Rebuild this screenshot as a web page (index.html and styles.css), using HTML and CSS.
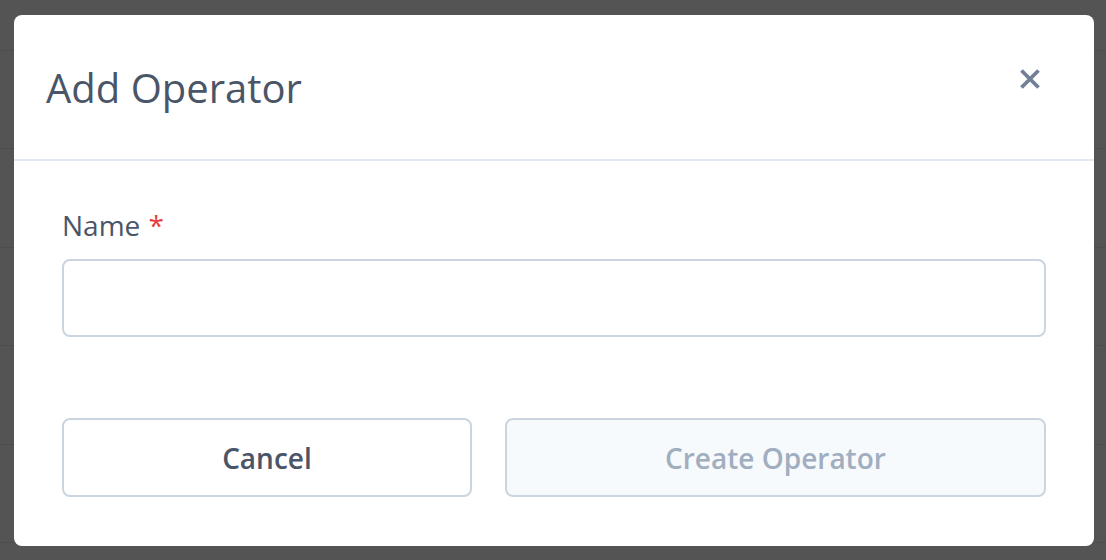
FILE: index.html
```html
<!DOCTYPE html>
<html lang="en">
<head>
<meta charset="utf-8">
<title>Add Operator</title>
<link rel="stylesheet" href="styles.css">
</head>
<body>
  <div class="modal">
    <div class="modal-header">
      <h1 class="modal-title">Add Operator</h1>
      <button class="close-btn" aria-label="Close">
        <svg width="22" height="22" viewBox="0 0 22 22" aria-hidden="true">
          <path d="M2.5 2.5 L19.5 19.5 M19.5 2.5 L2.5 19.5" stroke="#718096" stroke-width="3.8" stroke-linecap="butt" fill="none"/>
        </svg>
      </button>
    </div>
    <div class="modal-body">
      <label class="field-label" for="name">Name <span class="req">*</span></label>
      <input class="text-input" id="name" type="text">
      <div class="actions">
        <button class="btn btn-cancel">Cancel</button>
        <button class="btn btn-create" disabled>Create Operator</button>
      </div>
    </div>
  </div>
</body>
</html>
```
FILE: styles.css
```css
html, body {
  margin: 0;
  height: 100%;
}
body {
  background-color: #545454;
  background-image: repeating-linear-gradient(180deg, #4d4d4d 0, #4d4d4d 1px, #545454 1px, #545454 98.4px);
  background-position: 0 50px;
  padding: 15px 0 0 14px;
  box-sizing: border-box;
  font-family: "Open Sans", "Noto Sans", sans-serif;
  overflow: hidden;
}
.modal {
  width: 1080px;
  background: #ffffff;
  border-radius: 8px;
  overflow: hidden;
}
.modal-header {
  height: 144px;
  border-bottom: 2px solid #e2e8f0;
  display: flex;
  align-items: center;
  justify-content: space-between;
  padding: 0 53px 0 32px;
}
.modal-title {
  margin: 0;
  font-size: 40px;
  font-weight: 400;
  color: #4a5568;
  line-height: normal;
}
.close-btn {
  border: 0;
  background: none;
  padding: 0;
  width: 22px;
  height: 22px;
  display: flex;
  margin-top: -16px;
}
.modal-body {
  padding: 44px 48px 49px;
  display: flex;
  flex-direction: column;
}
.field-label {
  font-size: 28px;
  line-height: 40px;
  color: #4a5568;
  font-weight: 400;
}
.req {
  color: #e53e3e;
  margin-left: 1px;
}
.text-input {
  margin-top: 14px;
  height: 78px;
  box-sizing: border-box;
  border: 2px solid #cbd5e0;
  border-radius: 8px;
  background: #fff;
  font-family: inherit;
  font-size: 28px;
  padding: 0 20px;
  outline: none;
}
.actions {
  margin-top: 81px;
  display: flex;
  gap: 33px;
}
.btn {
  flex: 1 1 auto;
  height: 79px;
  box-sizing: border-box;
  border: 2px solid #cbd5e0;
  border-radius: 8px;
  font-family: inherit;
  font-size: 28px;
  font-weight: 600;
  padding: 0 20px;
}
.btn-cancel {
  background: #ffffff;
  color: #4a5568;
}
.btn-create {
  background: #f7fafc;
  color: #a0aec0;
}
```
